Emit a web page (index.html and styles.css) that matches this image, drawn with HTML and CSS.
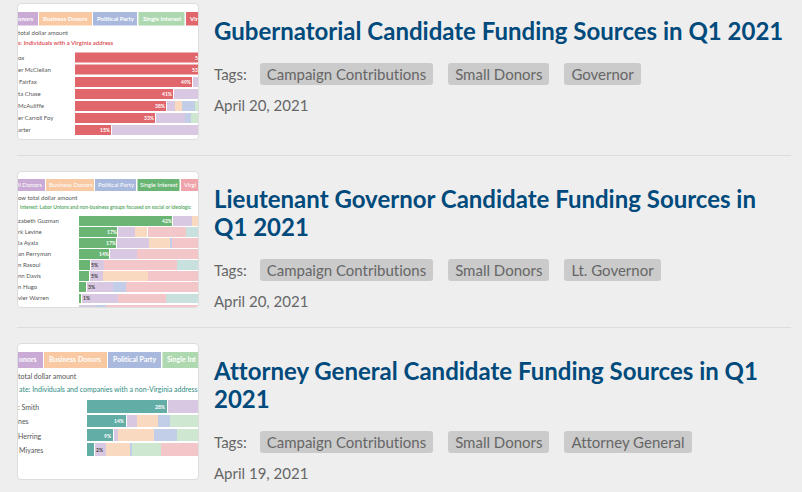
FILE: index.html
```html
<!DOCTYPE html>
<html lang="en">
<head>
<meta charset="utf-8">
<title>Candidate Funding Sources</title>
<link rel="stylesheet" href="styles.css">
</head>
<body>
<main class="posts">
  <article class="post">
    <svg class="thumb" viewBox="0 0 180 135" preserveAspectRatio="xMinYMin slice" aria-hidden="true">
      <g>
        <rect class="violet" x="-20" y="8" width="40" height="13.500"/><rect class="orange" x="21" y="8" width="53" height="13.500"/><rect class="blue" x="75" y="8" width="44" height="13.500"/><rect class="green" x="120.500" y="8" width="46" height="13.500"/><rect class="red" x="168" y="8" width="12" height="13.500"/>
      </g>
      <g class="tab"><text x="0" y="17">onors</text><text x="25" y="17">Business Donors</text><text x="79" y="17">Political Party</text><text x="125" y="17">Single Interest</text><text x="172" y="17">Vir</text></g>
      <text class="note" x="0" y="31">total dollar amount</text>
      <text class="key red-text" x="0" y="41">s: Individuals with a Virginia address</text>
      <g class="name"><text x="0" y="56">ox</text><text x="0" y="68">er McClellan</text><text x="1" y="80">Fairfax</text><text x="0" y="92">ta Chase</text><text x="0" y="104">McAuliffe</text><text x="0" y="116">er Carroll Foy</text><text x="0" y="128">arter</text></g>
      <g class="red"><rect x="57" y="48.500" width="123" height="10"/><rect x="57" y="60.500" width="123" height="10"/><rect x="57" y="73" width="117" height="10"/><rect x="57" y="85" width="98" height="10"/><rect x="57" y="97" width="91" height="10"/><rect x="57" y="109" width="80" height="10"/><rect x="57" y="121" width="36" height="10"/></g>
      <g class="lilac"><rect x="175" y="73" width="5" height="10"/><rect x="156" y="85" width="24" height="10"/><rect x="149" y="97" width="8" height="10"/><rect x="138" y="109" width="29" height="10"/><rect x="94" y="121" width="86" height="10"/></g>
      <rect class="peach" x="157" y="97" width="7" height="10"/><rect class="sky" x="164" y="97" width="13" height="10"/><rect class="mint" x="177" y="97" width="3" height="10"/>
      <rect class="sky" x="167" y="109" width="6" height="10"/><rect class="mint" x="173" y="109" width="7" height="10"/>
      <g class="pct"><text x="177" y="56">5</text><text x="174" y="68">53</text><text x="163" y="80">49%</text><text x="144" y="92">41%</text><text x="137" y="104">38%</text><text x="126" y="116">33%</text><text x="82" y="128">15%</text></g>
    </svg>
    <div class="body">
      <h2 class="title"><a href="#governor">Gubernatorial Candidate Funding Sources in Q1 2021</a></h2>
      <div class="tags"><span>Tags:</span><a class="tag" href="#campaign">Campaign Contributions</a><a class="tag" href="#donors">Small Donors</a><a class="tag" href="#gov">Governor</a></div>
      <time class="date" datetime="2021-04-20">April 20, 2021</time>
    </div>
  </article>

  <article class="post">
    <svg class="thumb" viewBox="0 0 180 135" preserveAspectRatio="xMinYMin slice" aria-hidden="true">
      <g>
        <rect class="violet" x="-20" y="7" width="47" height="12"/><rect class="orange" x="28" y="7" width="48" height="12"/><rect class="blue" x="77" y="7" width="41" height="12"/><rect class="deep-green" x="119.500" y="7" width="42" height="12"/><rect class="pink" x="163" y="7" width="17" height="12"/>
      </g>
      <g class="tab small"><text x="0" y="15">ll Donors</text><text x="31" y="15">Business Donors</text><text x="80" y="15">Political Party</text><text x="122" y="15">Single Interest</text><text x="166" y="15">Virgi</text></g>
      <text class="note" x="0" y="28">ow total dollar amount</text>
      <text class="key green-text" x="2" y="37">Interest: Labor Unions and non-business groups focused on social or ideologic</text>
      <g class="name"><text x="0" y="51">zabeth Guzman</text><text x="0" y="62">rk Levine</text><text x="0" y="73">la Ayala</text><text x="0" y="84">an Perryman</text><text x="0" y="95">n Rasoul</text><text x="0" y="106">nn Davis</text><text x="0" y="117">n Hugo</text><text x="0" y="128">vler Warren</text></g>
      <g class="pink-light"><rect x="130" y="55" width="38" height="10"/><rect x="154" y="66" width="26" height="10"/><rect x="119" y="77" width="61" height="10"/><rect x="86" y="88" width="73" height="10"/><rect x="130" y="99" width="50" height="10"/><rect x="108" y="110" width="72" height="10"/><rect x="100" y="122" width="48" height="9"/><rect x="88" y="133" width="92" height="2"/></g>
      <g class="lilac"><rect x="155" y="44" width="19" height="10"/><rect x="100" y="55" width="17" height="10"/><rect x="99" y="66" width="32" height="10"/><rect x="92" y="77" width="27" height="10"/><rect x="73" y="88" width="13" height="10"/><rect x="72" y="99" width="13" height="10"/><rect x="69" y="110" width="26" height="10"/><rect x="64" y="122" width="36" height="9"/><rect x="61" y="133" width="17" height="2"/></g>
      <g class="peach"><rect x="174" y="44" width="6" height="10"/><rect x="117" y="55" width="12" height="10"/><rect x="131" y="66" width="21" height="10"/><rect x="85" y="99" width="45" height="10"/></g>
      <g class="aqua"><rect x="168" y="55" width="12" height="10"/><rect x="159" y="88" width="21" height="10"/><rect x="148" y="122" width="32" height="9"/></g>
      <g class="sky"><rect x="152" y="66" width="2" height="10"/><rect x="95" y="110" width="13" height="10"/><rect x="78" y="133" width="10" height="2"/></g>
      <g class="deep-green"><rect x="61" y="44" width="93" height="10"/><rect x="61" y="55" width="38" height="10"/><rect x="61" y="66" width="37" height="10"/><rect x="61" y="77" width="30" height="10"/><rect x="61" y="88" width="11" height="10"/><rect x="61" y="99" width="10" height="10"/><rect x="61" y="110" width="7" height="10"/><rect x="61" y="122" width="2" height="9"/></g>
      <g class="pct"><text x="144" y="51">42%</text><text x="89" y="62">17%</text><text x="88" y="73">17%</text><text x="81" y="84">14%</text></g>
      <g class="pct dark"><text x="73" y="95">5%</text><text x="73" y="106">5%</text><text x="70" y="117">3%</text><text x="65" y="128">1%</text></g>
    </svg>
    <div class="body">
      <h2 class="title"><a href="#lieutenant">Lieutenant Governor Candidate Funding Sources in Q1 2021</a></h2>
      <div class="tags"><span>Tags:</span><a class="tag" href="#campaign">Campaign Contributions</a><a class="tag" href="#donors">Small Donors</a><a class="tag" href="#lt-gov">Lt. Governor</a></div>
      <time class="date" datetime="2021-04-20">April 20, 2021</time>
    </div>
  </article>

  <article class="post">
    <svg class="thumb" viewBox="0 0 180 135" preserveAspectRatio="xMinYMin slice" aria-hidden="true">
      <g>
        <rect class="violet" x="-20" y="8" width="45" height="16"/><rect class="orange" x="26" y="8" width="63" height="16"/><rect class="blue" x="90" y="8" width="53" height="16"/><rect class="green" x="144.500" y="8" width="36" height="16"/>
      </g>
      <g class="tab large"><text x="1" y="18">onors</text><text x="31" y="18">Business Donors</text><text x="95" y="18">Political Party</text><text x="149" y="18">Single Int</text></g>
      <text class="note large" x="0" y="35">total dollar amount</text>
      <text class="key teal-text large" x="1" y="48">ate: Individuals and companies with a non-Virginia address</text>
      <g class="name large"><text x="0" y="66">: Smith</text><text x="0" y="80">nes</text><text x="0" y="95">Herring</text><text x="1" y="109">Miyares</text></g>
      <g class="teal"><rect x="69" y="56" width="80" height="13"/><rect x="69" y="71" width="39" height="12"/><rect x="69" y="85" width="26" height="12"/><rect x="69" y="99" width="7" height="13"/></g>
      <g class="lilac"><rect x="150" y="56" width="30" height="13"/><rect x="109" y="71" width="10" height="12"/><rect x="96" y="85" width="4" height="12"/><rect x="77" y="99" width="11" height="13"/></g>
      <g class="peach"><rect x="119" y="71" width="21" height="12"/><rect x="100" y="85" width="36" height="12"/><rect x="88" y="99" width="24" height="13"/></g>
      <g class="sky"><rect x="140" y="71" width="12" height="12"/><rect x="136" y="85" width="23" height="12"/><rect x="112" y="99" width="2" height="13"/></g>
      <g class="mint"><rect x="152" y="71" width="28" height="12"/><rect x="159" y="85" width="21" height="12"/><rect x="114" y="99" width="29" height="13"/></g>
      <rect class="pink-light" x="143" y="99" width="37" height="13"/>
      <g class="pct large"><text x="137" y="65">28%</text><text x="96" y="79">14%</text><text x="86" y="94">9%</text><text class="dark" x="78" y="108">2%</text></g>
    </svg>
    <div class="body">
      <h2 class="title"><a href="#attorney">Attorney General Candidate Funding Sources in Q1 2021</a></h2>
      <div class="tags"><span>Tags:</span><a class="tag" href="#campaign">Campaign Contributions</a><a class="tag" href="#donors">Small Donors</a><a class="tag" href="#ag">Attorney General</a></div>
      <time class="date" datetime="2021-04-19">April 19, 2021</time>
    </div>
  </article>
</main>
</body>
</html>
```
FILE: styles.css
```css
* { box-sizing: border-box; }
body {
  margin: 0;
  background: #eee;
  color: #666;
  font: 15px/22px Lato, sans-serif;
  font-variant-ligatures: none;
}
.posts { padding: 3px 11px 0 17px; }
.post {
  display: flex;
  align-items: flex-start;
  gap: 15px;
  padding-bottom: 15px;
  margin-bottom: 15px;
  border-bottom: 1px solid #ddd;
}
.post:last-child { margin-bottom: 0; padding-bottom: 0; border-bottom: 0; }
.thumb {
  flex: none;
  width: 182px;
  height: 137px;
  background: #fff;
  border: 1px solid #ddd;
  border-radius: 4px;
  overflow: hidden;
}
.body { flex: 1; min-width: 0; padding-top: 14px; }
.title { margin: 0 0 18px; font-size: 24px; line-height: 28px; font-weight: 700; }
.title a { color: #004a7c; text-decoration: none; }
.tags { display: flex; flex-wrap: wrap; gap: 15px; margin-bottom: 9px; }
.tags span { margin-right: -2px; }
.tag {
  padding: 0 7px;
  border-radius: 3px;
  background: #cbcbcb;
  color: #666;
  text-decoration: none;
}
.date { display: block; }

/* Chart previews */
.violet { fill: #caabd5; }
.orange { fill: #f8c9a2; }
.blue { fill: #a9b9dd; }
.green { fill: #add8b0; }
.red { fill: #e0666b; }
.deep-green { fill: #6ab573; }
.teal { fill: #63ada7; }
.pink { fill: #efa4ab; }
.pink-light { fill: #f3c7ca; }
.lilac { fill: #d9c8e2; }
.peach { fill: #f9d9bf; }
.sky { fill: #c2cde7; }
.mint { fill: #cde7d0; }
.aqua { fill: #c8e1df; }
.tab { fill: #fff; font-size: 6px; font-weight: 700; }
.note { fill: #555; font-size: 6px; }
.key { font-size: 6px; font-weight: 600; }
.name { fill: #555; font-size: 6px; }
.pct { fill: #fff; font-size: 5px; font-weight: 700; }
.pct.dark, .pct .dark { fill: #444; }
.red-text { fill: #d9484f; }
.green-text { fill: #4da457; font-size: 5px; }
.teal-text { fill: #2f8c84; }
.tab.small { font-weight: 400; }
.tab.large, .note.large { font-size: 7px; }
.key.large { font-size: 7px; font-weight: 400; }
.name.large { font-size: 7px; }
```
